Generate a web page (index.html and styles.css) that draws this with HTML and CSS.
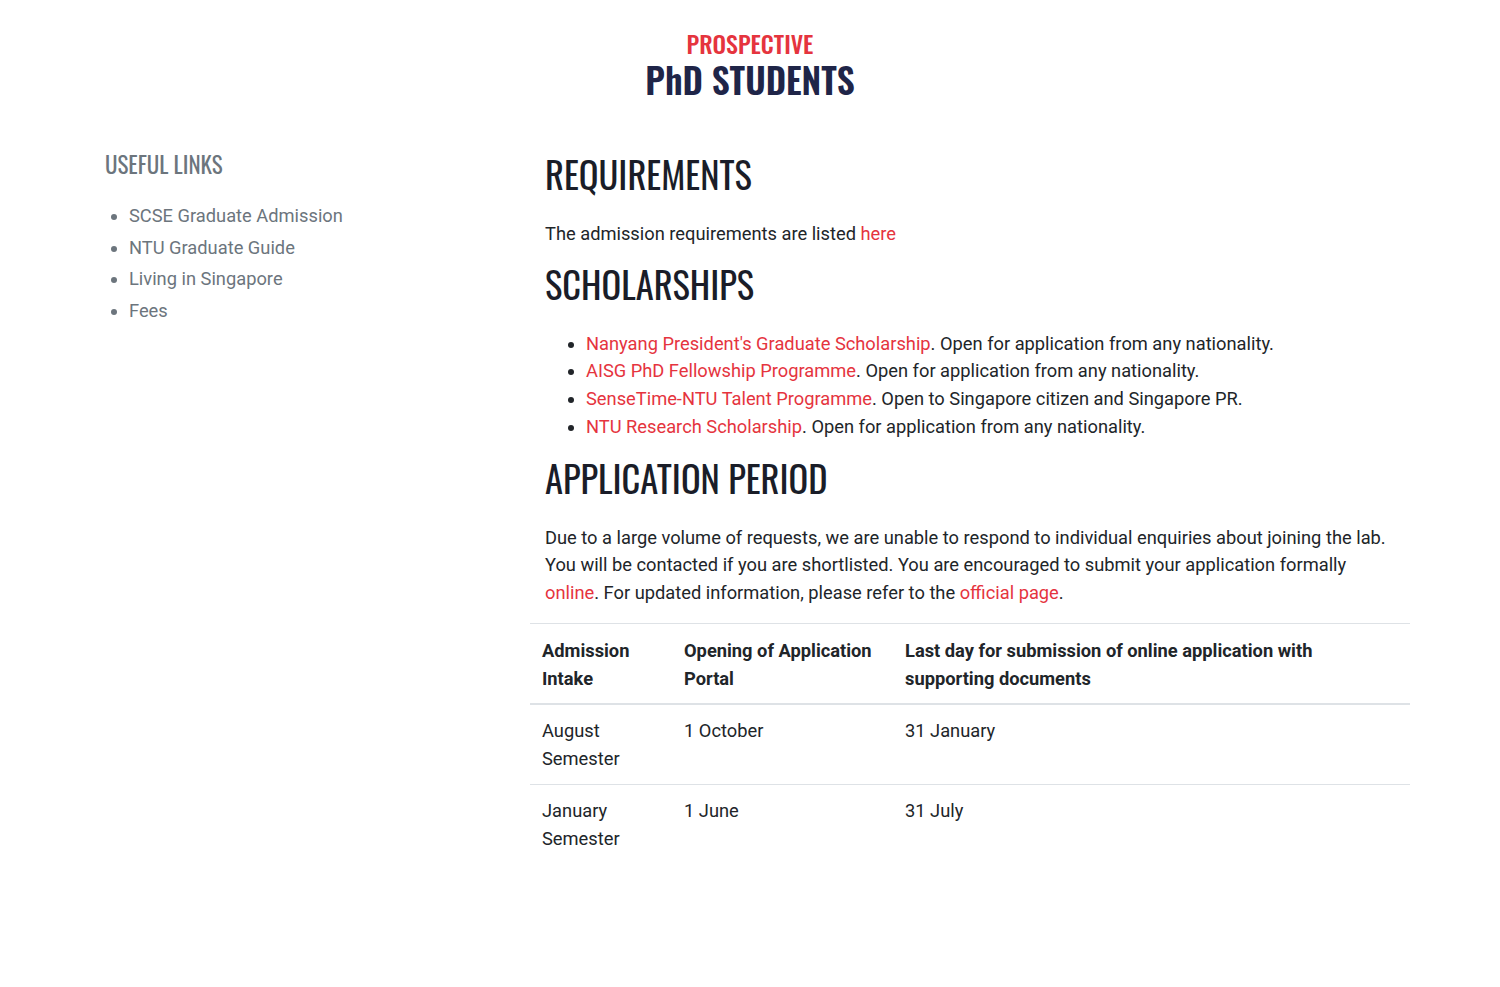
FILE: index.html
```html
<!DOCTYPE html>
<html lang="en">
<head>
<meta charset="utf-8">
<title>Prospective PhD Students</title>
<link rel="stylesheet" href="styles.css">
</head>
<body>
<header class="page-header">
  <div class="kicker">PROSPECTIVE</div>
  <h1 class="page-title">PhD STUDENTS</h1>
</header>
<div class="container">
  <aside class="sidebar">
    <h3 class="side-title">USEFUL LINKS</h3>
    <ul class="side-list">
      <li><a href="#">SCSE Graduate Admission</a></li>
      <li><a href="#">NTU Graduate Guide</a></li>
      <li><a href="#">Living in Singapore</a></li>
      <li><a href="#">Fees</a></li>
    </ul>
  </aside>
  <main class="main">
    <h2 class="section-title">REQUIREMENTS</h2>
    <p>The admission requirements are listed <a href="#">here</a></p>
    <h2 class="section-title">SCHOLARSHIPS</h2>
    <ul class="bullets">
      <li><a href="#">Nanyang President's Graduate Scholarship</a>. Open for application from any nationality.</li>
      <li><a href="#">AISG PhD Fellowship Programme</a>. Open for application from any nationality.</li>
      <li><a href="#">SenseTime-NTU Talent Programme</a>. Open to Singapore citizen and Singapore PR.</li>
      <li><a href="#">NTU Research Scholarship</a>. Open for application from any nationality.</li>
    </ul>
    <h2 class="section-title">APPLICATION PERIOD</h2>
    <p>Due to a large volume of requests, we are unable to respond to individual enquiries about joining the lab. You will be contacted if you are shortlisted. You are encouraged to submit your application formally <a href="#">online</a>. For updated information, please refer to the <a href="#">official page</a>.</p>
    <table class="intake">
      <thead>
        <tr>
          <th class="c1">Admission Intake</th>
          <th class="c2">Opening of Application Portal</th>
          <th>Last day for submission of online application with supporting documents</th>
        </tr>
      </thead>
      <tbody>
        <tr><td>August Semester</td><td>1 October</td><td>31 January</td></tr>
        <tr><td>January Semester</td><td>1 June</td><td>31 July</td></tr>
      </tbody>
    </table>
  </main>
</div>
</body>
</html>
```
FILE: styles.css
```css
* { box-sizing: border-box; }
body {
  margin: 0;
  background: #fff;
  font-family: Roboto, "Liberation Sans", sans-serif;
  font-size: 18.3px;
  line-height: 27.5px;
  color: #212529;
}
a { color: #e5343e; text-decoration: none; }
.page-header {
  text-align: center;
  padding-top: 30px;
}
.kicker, .page-title, .side-title, .section-title {
  font-family: Oswald, "Liberation Sans Narrow", "DejaVu Sans Condensed", sans-serif;
  font-weight: 400;
}
.kicker {
  color: #e5343e;
  font-size: 24px;
  line-height: 26px;
  font-weight: 500;
}
.page-title {
  margin: 2px 0 0;
  color: #1f2548;
  font-size: 35.5px;
  line-height: 42px;
  font-weight: 600;
}
.container {
  max-width: 1320px;
  margin: 0 auto;
  display: grid;
  grid-template-columns: 440px 880px;
  padding-top: 52px;
}
.sidebar { padding: 0 15px; }
.side-title {
  margin: 0 0 24px;
  color: #6c757d;
  font-size: 23px;
  line-height: 24px;
}
.side-list {
  margin: 0;
  padding-left: 24px;
  color: #6c757d;
  line-height: 31.6px;
}
.side-list a { color: #6c757d; }
.main { padding: 0 15px; }
.section-title {
  margin: 0 0 24px;
  color: #1a1d28;
  font-size: 36.5px;
  line-height: 44px;
}
.main p { margin: 0 0 14px; }
.bullets { margin: 0 0 15.5px; padding-left: 41px; line-height: 27.67px; }
.intake {
  margin: 17px -15px 0;
  width: 880px;
  border-collapse: collapse;
  color: #212529;
}
.intake th, .intake td {
  text-align: left;
  vertical-align: top;
  padding: 12px;
  border-top: 1px solid #dee2e6;
}
.intake th {
  font-weight: 700;
  padding: 13px 12px 11px;
  border-bottom: 2px solid #dee2e6;
}
.intake .c1 { width: 142px; }
.intake .c2 { width: 221px; }
```
